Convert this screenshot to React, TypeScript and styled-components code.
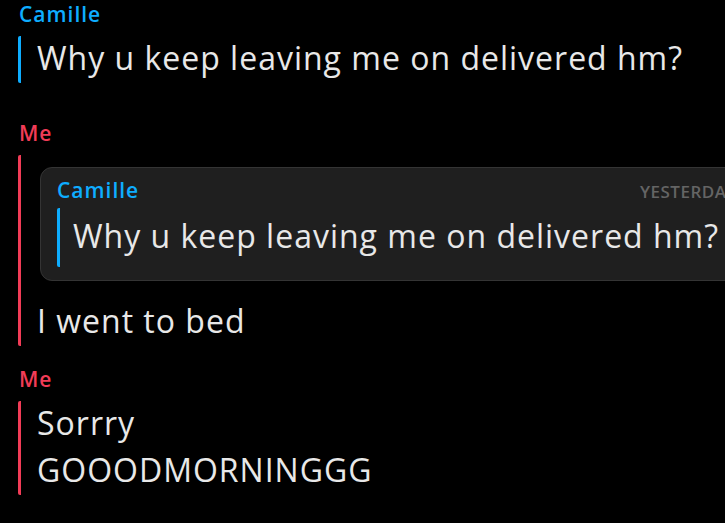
import React from "react";
import styled, { createGlobalStyle } from "styled-components";

const BLUE = "#0eadff";
const RED = "#f23c57";

const GlobalStyle = createGlobalStyle`
  html, body {
    margin: 0;
    padding: 0;
    background: #000;
    overflow: hidden;
  }
  body {
    font-family: "Open Sans", "Noto Sans", sans-serif;
  }
`;

const Chat = styled.div`
  width: 760px;
  height: 523px;
  padding: 0 0 0 18px;
  display: flex;
  flex-direction: column;
`;

const Group = styled.div`
  display: flex;
  flex-direction: column;
`;

const Sender = styled.div<{ $color: string; $top?: number }>`
  color: ${(p) => p.$color};
  font-size: 21px;
  font-weight: 600;
  letter-spacing: 1px;
  line-height: 29px;
  margin: ${(p) => p.$top ?? 0}px 0 7px 1px;
`;

const Thread = styled.div<{ $color: string }>`
  border-left: 3px solid ${(p) => p.$color};
  border-radius: 2px;
  padding: 0 0 4px 16px;
  display: flex;
  flex-direction: column;
  gap: 4px;
`;

const Line = styled.div`
  color: #e8e8e8;
  font-size: 32px;
  letter-spacing: 1px;
  line-height: 43px;
  white-space: nowrap;
`;

const QuoteCard = styled.div`
  margin: 12px 0 14px 3px;
  width: 714px;
  box-sizing: border-box;
  background: #1f1f1f;
  border: 1px solid #343434;
  border-radius: 12px;
  padding: 8px 16px 13px 16px;
  display: flex;
  flex-direction: column;
`;

const QuoteHeader = styled.div`
  display: flex;
  justify-content: space-between;
  align-items: baseline;
  margin-bottom: 3px;
`;

const QuoteSender = styled.span`
  color: ${BLUE};
  font-size: 21px;
  font-weight: 600;
  letter-spacing: 1px;
  line-height: 29px;
`;

const Stamp = styled.span`
  color: #646464;
  font-size: 17px;
  font-weight: 600;
  letter-spacing: 0.5px;
`;

const QuoteBody = styled.div`
  border-left: 3px solid ${BLUE};
  border-radius: 2px;
  padding: 6px 0 10px 13px;
`;

export default function App() {
  return (
    <>
      <GlobalStyle />
      <Chat>
        <Group>
          <Sender $color={BLUE}>Camille</Sender>
          <Thread $color={BLUE}>
            <Line>Why u keep leaving me on delivered hm?</Line>
          </Thread>
        </Group>
        <Group>
          <Sender $color={RED} $top={36}>Me</Sender>
          <Thread $color={RED}>
            <QuoteCard>
              <QuoteHeader>
                <QuoteSender>Camille</QuoteSender>
                <Stamp>YESTERDAY</Stamp>
              </QuoteHeader>
              <QuoteBody>
                <Line>Why u keep leaving me on delivered hm?</Line>
              </QuoteBody>
            </QuoteCard>
            <Line>I went to bed</Line>
          </Thread>
        </Group>
        <Group>
          <Sender $color={RED} $top={19}>Me</Sender>
          <Thread $color={RED}>
            <Line>Sorrry</Line>
            <Line>GOOODMORNINGGG</Line>
          </Thread>
        </Group>
      </Chat>
    </>
  );
}
